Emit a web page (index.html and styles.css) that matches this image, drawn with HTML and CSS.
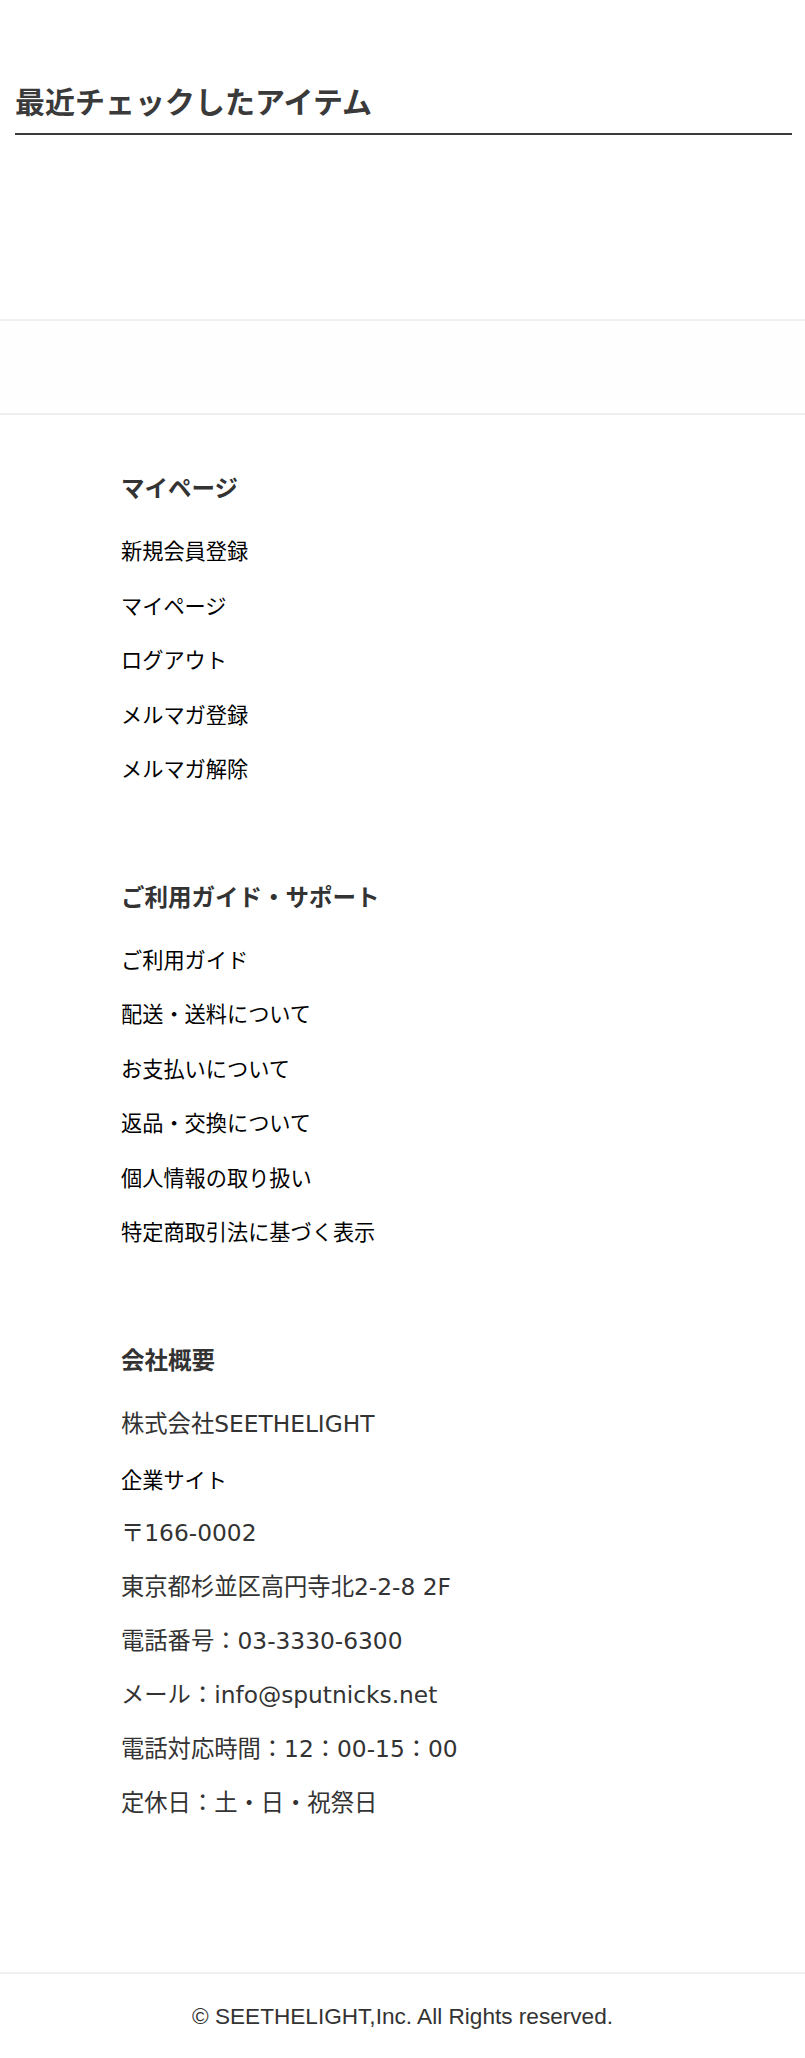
FILE: index.html
```html
<!DOCTYPE html>
<html lang="ja">
<head>
<meta charset="utf-8">
<title>最近チェックしたアイテム</title>
<link rel="stylesheet" href="styles.css">
</head>
<body>
<section class="recent">
  <h2 class="recent-title">最近チェックしたアイテム</h2>
  <div class="recent-body"></div>
</section>
<div class="band"></div>
<nav class="fnav">
  <div class="fgroup">
    <h3 class="fgroup-title">マイページ</h3>
    <ul class="flist">
      <li><a href="#">新規会員登録</a></li>
      <li><a href="#">マイページ</a></li>
      <li><a href="#">ログアウト</a></li>
      <li><a href="#">メルマガ登録</a></li>
      <li><a href="#">メルマガ解除</a></li>
    </ul>
  </div>
  <div class="fgroup">
    <h3 class="fgroup-title">ご利用ガイド・サポート</h3>
    <ul class="flist">
      <li><a href="#">ご利用ガイド</a></li>
      <li><a href="#">配送・送料について</a></li>
      <li><a href="#">お支払いについて</a></li>
      <li><a href="#">返品・交換について</a></li>
      <li><a href="#">個人情報の取り扱い</a></li>
      <li><a href="#">特定商取引法に基づく表示</a></li>
    </ul>
  </div>
  <div class="fgroup">
    <h3 class="fgroup-title">会社概要</h3>
    <ul class="flist company">
      <li class="info first">株式会社SEETHELIGHT</li>
      <li><a href="#">企業サイト</a></li>
      <li class="info">〒166-0002</li>
      <li class="info">東京都杉並区高円寺北2-2-8 2F</li>
      <li class="info">電話番号：03-3330-6300</li>
      <li class="info">メール：info@sputnicks.net</li>
      <li class="info">電話対応時間：12：00-15：00</li>
      <li class="info">定休日：土・日・祝祭日</li>
    </ul>
  </div>
</nav>
<footer class="copyright">
  <p>© SEETHELIGHT,Inc. All Rights reserved.</p>
</footer>
</body>
</html>
```

FILE: styles.css
```css
html, body {
  margin: 0;
  padding: 0;
  background: #fff;
}
body {
  font-family: "Noto Sans CJK JP", "Noto Sans", sans-serif;
  color: #333;
}
.recent {
  padding: 80px 13px 0 15px;
}
.recent-title {
  margin: 0;
  font-size: 30px;
  line-height: 40px;
  font-weight: 700;
  color: #3a3a3a;
  padding-bottom: 13px;
  border-bottom: 2px solid #3c3c3c;
}
.recent-body {
  height: 184px;
}
.band {
  border-top: 2px solid #efefef;
  border-bottom: 2px solid #efefef;
  height: 92px;
  background: #fefefe;
}
.fnav {
  display: flex;
  flex-direction: column;
  gap: 84px;
  padding: 56px 0 142px 121px;
}
.fgroup-title {
  margin: 0 0 20px;
  font-size: 23.5px;
  line-height: 32px;
  font-weight: 700;
  color: #333;
}
.flist {
  list-style: none;
  margin: 0;
  padding: 0;
}
.flist li {
  font-size: 21.2px;
  line-height: 54.5px;
}
.flist a {
  color: #000;
  text-decoration: none;
}
.company li {
  line-height: 54px;
}
.company li.first {
  line-height: 57px;
}
.company li.info {
  font-family: "DejaVu Sans", "Noto Sans CJK JP", sans-serif;
  font-size: 23.3px;
  color: #333;
}
.copyright {
  border-top: 2px solid #f0f0f0;
  padding: 28px 0 25px;
  text-align: center;
}
.copyright p {
  margin: 0;
  font-family: "Liberation Sans", Arial, sans-serif;
  font-size: 22.6px;
  line-height: 30px;
  color: #333;
}
```
